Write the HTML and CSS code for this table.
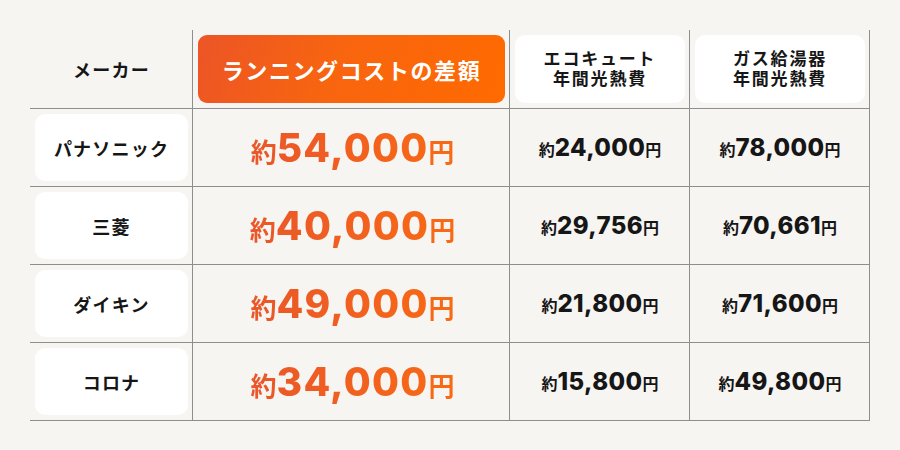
FILE: index.html
```html
<!DOCTYPE html>
<html lang="ja">
<head>
<meta charset="utf-8">
<link rel="stylesheet" href="styles.css">
</head>
<body>
<div class="wrap">
  <div class="table">
    <div class="cell head"><span class="label">メーカー</span></div>
    <div class="cell head"><div class="box orange">ランニングコストの差額</div></div>
    <div class="cell head"><div class="box white two"><span class="ln">エコキュート</span><span class="ln">年間光熱費</span></div></div>
    <div class="cell head"><div class="box white two"><span class="ln">ガス給湯器</span><span class="ln">年間光熱費</span></div></div>

    <div class="cell"><div class="box white">パナソニック</div></div>
    <div class="cell"><span class="big"><span class="u">約</span>54,000<span class="u">円</span></span></div>
    <div class="cell"><span class="sm"><span class="u">約</span>24,000<span class="u">円</span></span></div>
    <div class="cell"><span class="sm"><span class="u">約</span>78,000<span class="u">円</span></span></div>

    <div class="cell"><div class="box white">三菱</div></div>
    <div class="cell"><span class="big"><span class="u">約</span>40,000<span class="u">円</span></span></div>
    <div class="cell"><span class="sm"><span class="u">約</span>29,756<span class="u">円</span></span></div>
    <div class="cell"><span class="sm"><span class="u">約</span>70,661<span class="u">円</span></span></div>

    <div class="cell"><div class="box white">ダイキン</div></div>
    <div class="cell"><span class="big"><span class="u">約</span>49,000<span class="u">円</span></span></div>
    <div class="cell"><span class="sm"><span class="u">約</span>21,800<span class="u">円</span></span></div>
    <div class="cell"><span class="sm"><span class="u">約</span>71,600<span class="u">円</span></span></div>

    <div class="cell"><div class="box white">コロナ</div></div>
    <div class="cell"><span class="big"><span class="u">約</span>34,000<span class="u">円</span></span></div>
    <div class="cell"><span class="sm"><span class="u">約</span>15,800<span class="u">円</span></span></div>
    <div class="cell"><span class="sm"><span class="u">約</span>49,800<span class="u">円</span></span></div>
  </div>
</div>
</body>
</html>
```

FILE: styles.css
```css
* { box-sizing: border-box; }
html, body { margin: 0; padding: 0; }
body {
  width: 900px;
  height: 450px;
  background: #f6f5f2;
  font-family: "Noto Sans CJK JP", "Noto Sans", sans-serif;
  color: #161616;
  overflow: hidden;
}
.wrap { padding: 30px 0 0 30px; }
.table {
  display: grid;
  grid-template-columns: 163px 317px 180px 180px;
  grid-template-rows: 79px repeat(4, 78px);
  width: 840px;
}
.cell {
  border-right: 1px solid #8e8e8e;
  border-bottom: 1px solid #8e8e8e;
  padding: 5px 4px 5px 5px;
  display: flex;
  align-items: center;
  justify-content: center;
}
.label, .box {
  font-weight: 700;
  font-size: 18px;
  letter-spacing: 1.2px;
}
.box {
  width: 100%;
  height: 100%;
  display: flex;
  align-items: center;
  justify-content: center;
  text-align: center;
  border-radius: 10px;
}
.white { background: #ffffff; }
.two {
  flex-direction: column;
  font-size: 17px;
  letter-spacing: 1.8px;
  padding-bottom: 2px;
}
.ln { display: block; line-height: 20px; height: 20px; }
.orange {
  background: linear-gradient(110deg, #ec5526 0%, #f8650f 45%, #ff6a00 100%);
  color: #ffffff;
  font-size: 22px;
  letter-spacing: 1.6px;
  border-radius: 9px;
}
.big, .sm {
  font-family: "Inter", "Noto Sans CJK JP", sans-serif;
  font-weight: 800;
  white-space: nowrap;
}
.big {
  font-size: 39px;
  letter-spacing: 1.2px;
  background: linear-gradient(90deg, #e9562a, #f96a14);
  -webkit-background-clip: text;
  background-clip: text;
  color: transparent;
  padding-left: 2px;
}
.big .u { font-size: 26px; font-family: "Noto Sans CJK JP", sans-serif; font-weight: 700; letter-spacing: 0; }
.sm { font-size: 24px; letter-spacing: 0.4px; color: #161616; }
.sm .u { font-size: 16px; font-family: "Noto Sans CJK JP", sans-serif; font-weight: 700; letter-spacing: 0; }
```
